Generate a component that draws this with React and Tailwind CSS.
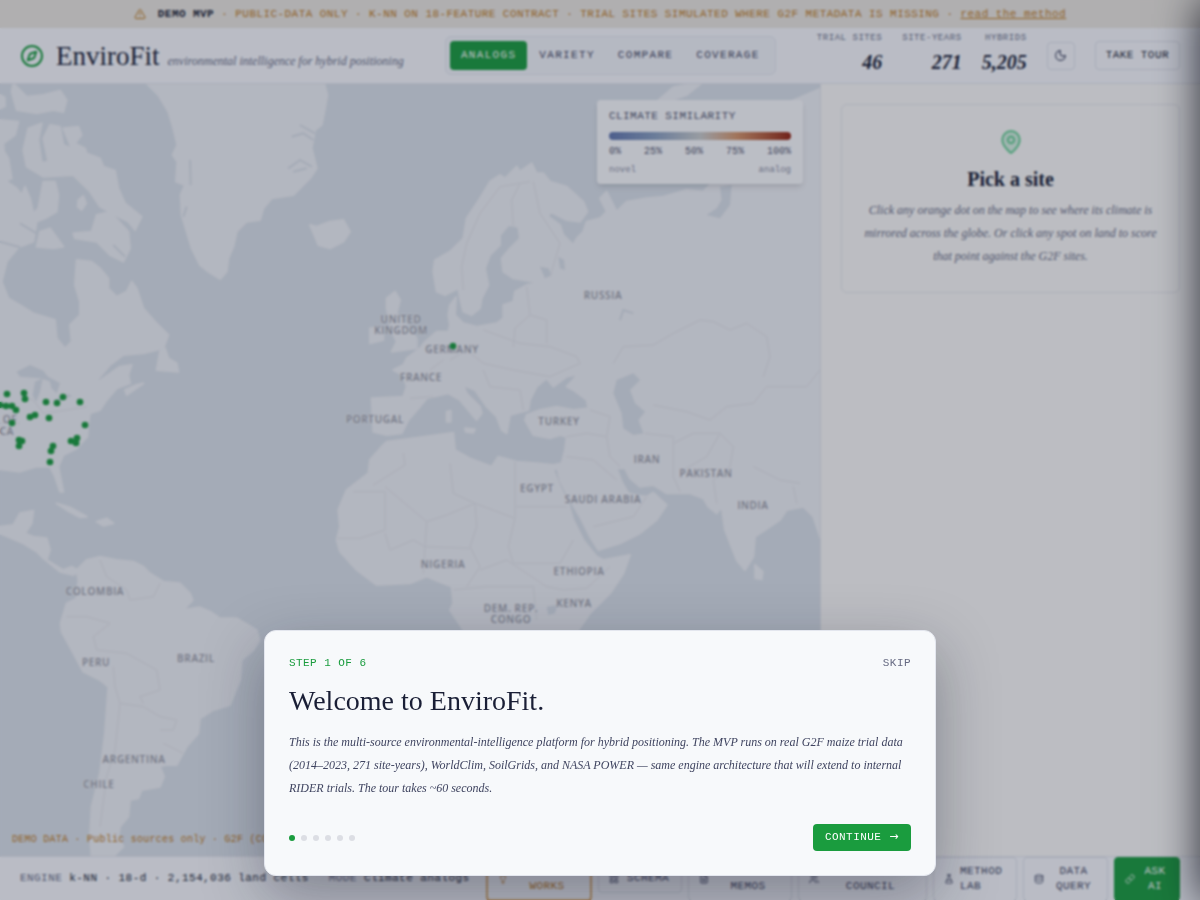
import { useState } from "react";
import {
  TriangleAlert,
  Compass,
  Moon,
  MapPin,
  Lightbulb,
  LayoutGrid,
  FileText,
  Users,
  FlaskConical,
  Database,
  Link,
} from "lucide-react";

const TABS = ["Analogs", "Variety", "Compare", "Coverage"];

const STATS = [
  { label: "Trial sites", value: "46" },
  { label: "Site-years", value: "271" },
  { label: "Hybrids", value: "5,205" },
];

const LAND = [
  // arctic islands
  "M40 250L55 265L80 290L130 285L180 272L200 300L190 336L160 330L110 340L50 330L35 275Z",
  "M0 285L14 292L15 318L0 326Z",
  "M0 360L55 365L45 405L10 430L12 455L25 475L35 535L0 550Z",
  "M85 385L125 370L115 420L125 488L145 485L130 415L150 375L180 380L190 435L215 445L190 385L235 380L245 405L225 430L255 445L260 460L300 475L310 500L345 512L355 565L375 610L425 650L405 690L385 665L355 650L300 620L270 575L220 525L130 530L80 500L70 450Z",
  "M290 645L330 635L385 695L390 745L370 785L330 765L290 725L225 715L220 700L275 695Z",
  "M120 695L150 685L190 740L160 745L110 740Z",
  "M235 600L250 588L258 610L245 630L233 620Z",
  // north america
  "M0 555L20 545L50 565L65 585L75 560L90 595L100 640L115 625L130 545L165 545L175 585L170 635L135 655L110 665L100 725L55 742L20 785L5 845L25 895L60 915L100 940L165 960L170 1015L195 1045L215 1025L210 975L240 945L240 905L225 855L230 780L275 785L300 805L325 835L325 865L350 890L380 875L395 845L410 865L430 925L465 965L505 1005L490 1045L430 1060L370 1065L330 1095L285 1148L300 1142L360 1100L395 1095L385 1125L390 1150L350 1165L320 1200L300 1230L270 1240L265 1270L262 1310L230 1345L190 1365L175 1400L185 1450L190 1475L180 1475L165 1430L150 1400L110 1400L60 1415L0 1408Z",
  "M430 1150L380 1185L375 1170L410 1155Z",
  "M480 1055L495 1045L505 1075L530 1090L535 1115L470 1110Z",
  // central america, caribbean
  "M0 1580L40 1575L60 1540L100 1532L95 1570L75 1600L100 1610L140 1615L150 1650L140 1680L190 1710L215 1700L235 1712L220 1725L180 1715L130 1675L110 1655L70 1630L0 1600Z",
  "M170 1510L210 1522L260 1550L240 1552L200 1530Z",
  "M290 1565L320 1555L340 1570L310 1577Z",
  // south america
  "M230 1710L260 1680L300 1670L350 1680L400 1685L430 1700L450 1720L490 1745L540 1750L570 1780L578 1800L550 1830L580 1825L600 1822L630 1835L660 1855L710 1855L770 1890L778 1920L760 1950L725 1980L720 2040L690 2115L640 2130L600 2155L595 2200L560 2240L530 2295L495 2295L480 2300L492 2330L480 2360L425 2370L415 2395L390 2400L385 2450L360 2480L355 2510L370 2540L340 2570L275 2570L270 2510L275 2420L300 2320L315 2200L325 2060L300 2040L250 2015L215 1950L185 1895L182 1870L200 1810L230 1795L235 1740Z",
  // greenland, iceland
  "M430 240L475 285L505 335L520 385L532 435L518 465L532 485L528 545L555 555L542 585L545 645L560 695L575 745L600 795L625 815L660 837L680 815L685 775L700 740L710 695L740 665L780 660L790 625L815 595L880 585L930 535L950 505L935 445L945 390L965 375L975 325L982 285L970 240Z",
  "M930 675L950 680L990 665L1030 660L1050 695L1030 725L990 745L955 735L945 710Z",
  // british isles
  "M1160 895L1185 875L1200 900L1190 940L1220 975L1250 1015L1250 1045L1175 1055L1190 1025L1175 995L1160 925Z",
  "M1110 985L1150 980L1150 1020L1110 1030Z",
  // eurasia and africa
  "M1180 1110L1210 1095L1220 1075L1260 1045L1275 1025L1310 995L1345 995L1350 975L1345 945L1350 915L1368 892L1365 945L1390 970L1430 980L1490 970L1510 955L1510 915L1540 905L1545 875L1580 855L1650 842L1600 845L1540 835L1510 815L1505 775L1530 745L1560 715L1555 680L1525 675L1500 705L1500 735L1470 765L1455 805L1465 855L1445 895L1440 925L1415 945L1390 935L1380 895L1375 865L1335 885L1310 875L1300 815L1305 780L1350 755L1390 715L1400 655L1440 595L1470 545L1500 525L1515 535L1550 500L1560 515L1595 490L1610 520L1630 520L1650 545L1700 560L1750 605L1762 635L1740 665L1700 660L1650 635L1645 650L1680 675L1690 705L1720 735L1730 715L1750 695L1760 665L1800 655L1820 635L1800 595L1820 575L1850 635L1880 605L1940 595L1990 590L2060 570L2110 575L2200 480L2300 400L2370 305L2470 262L2470 1640L2440 1550L2410 1520L2360 1530L2340 1560L2265 1610L2260 1670L2235 1710L2210 1680L2175 1590L2165 1520L2150 1540L2125 1520L2110 1495L2070 1480L2000 1480L1960 1455L1920 1460L1890 1435L1875 1405L1850 1405L1865 1445L1885 1480L1905 1485L1940 1490L1960 1478L2000 1515L1970 1560L1920 1600L1860 1630L1795 1650L1770 1610L1740 1550L1710 1500L1680 1440L1672 1405L1660 1410L1680 1460L1705 1510L1720 1560L1750 1620L1790 1670L1810 1680L1890 1665L1870 1720L1830 1780L1770 1840L1735 1890L1700 2000L1420 2000L1390 1890L1350 1830L1360 1810L1355 1760L1330 1750L1280 1730L1230 1750L1130 1755L1070 1710L1020 1655L1010 1620L1020 1580L1015 1530L1040 1470L1105 1420L1110 1380L1145 1340L1160 1325L1240 1315L1360 1298L1365 1350L1410 1375L1475 1400L1495 1370L1550 1385L1610 1390L1660 1395L1685 1390L1695 1350L1700 1310L1680 1305L1650 1315L1600 1305L1575 1260L1580 1245L1620 1230L1670 1220L1720 1230L1765 1225L1760 1200L1720 1170L1700 1160L1735 1122L1700 1130L1660 1160L1640 1135L1610 1160L1590 1200L1585 1230L1530 1245L1520 1300L1505 1290L1490 1250L1460 1220L1425 1170L1390 1155L1400 1180L1440 1220L1445 1240L1430 1260L1380 1200L1345 1180L1280 1195L1260 1220L1225 1260L1205 1300L1160 1305L1120 1295L1115 1195L1210 1190L1220 1160L1210 1125Z",
  // mediterranean islands, sri lanka, novaya zemlya
  "M1340 1235L1352 1232L1352 1265L1340 1265Z",
  "M1395 1285L1425 1288L1420 1298L1397 1295Z",
  "M2265 1695L2288 1715L2285 1738L2266 1735Z",
  "M1970 305L2020 262L2110 245L2060 285L2000 305Z",
];

const LAKES = [
  "M1850 1140L1900 1120L1920 1140L1890 1170L1905 1210L1935 1235L1915 1260L1930 1300L1900 1305L1870 1285L1865 1240L1840 1180Z",
  "M2160 560L2195 555L2190 615L2160 655L2120 645L2150 625L2165 600Z",
  "M50 1115L90 1095L130 1112L155 1145L120 1135L60 1130Z",
  "M105 1145L128 1135L120 1175L108 1205L98 1185Z",
  "M145 1130L180 1150L170 1180L155 1165Z",
  "M160 1200L205 1182L215 1188L170 1208Z",
  "M1620 800L1645 805L1655 825L1635 835Z",
  "M1675 770L1692 780L1695 810L1680 805Z",
  "M1640 1820L1672 1815L1665 1840L1645 1845Z",
];

const BORDERS = [
  "M1120 1455L1215 1395L1210 1360M1060 1475L1155 1475L1155 1590L1080 1615L1010 1615M1155 1460L1280 1565L1340 1545L1425 1510L1360 1480L1350 1390M1425 1510L1545 1555L1545 1385M1545 1520L1700 1520M1425 1510L1430 1580L1410 1640L1440 1700L1400 1760M1280 1565L1275 1640L1410 1645M1155 1600L1170 1650L1240 1620L1275 1640L1270 1720M1545 1555L1525 1640L1540 1690L1680 1690L1720 1620M1440 1710L1520 1680L1640 1760L1690 1770M1360 1770L1460 1760L1600 1760L1610 1860M1690 1770L1760 1765L1830 1700",
  "M1700 1310L1760 1300L1820 1310L1830 1370L1860 1400M1700 1370L1780 1380L1850 1440M1780 1580L1900 1550L1940 1490M1820 1310L1830 1250L1770 1230M1935 1300L2020 1310L2020 1430L2040 1475M2020 1330L2080 1300L2160 1300L2120 1370L2050 1410M2160 1300L2200 1340L2190 1400L2140 1440L2150 1510M2260 1400L2340 1440L2400 1450M2380 1460L2390 1510M1960 1215L2060 1235L2130 1260L2180 1220L2260 1210L2300 1160L2420 1160L2460 1110",
  "M1840 1090L1870 1040L1960 1035L2020 1000L2100 960L2140 965L2190 990L2240 970L2300 1010L2310 1070L2290 1130M1350 1080L1400 1050L1450 1090L1540 1110L1650 1130L1740 1090L1730 1070L1650 1040L1560 1030L1450 990M1540 1040L1545 985L1590 945L1640 960L1640 1030M1580 860L1590 945M1390 870L1385 800L1400 730L1440 640L1500 560L1590 545M1540 680L1535 600L1560 550M1600 545L1620 640L1680 730L1650 830M1230 1195L1300 1190M1290 1110L1330 1080M1450 1110L1470 1160L1560 1170L1570 1230",
  "M300 1680L320 1730L380 1770L390 1800L460 1790L480 1750M200 1850L260 1850L330 1870L280 1910L290 1950L380 1960L470 2010L480 2070L420 2090L430 2110M340 2000L345 2060L360 2110L430 2120L480 2150L530 2160L520 2190L480 2190M360 2110L345 2250L320 2330L300 2480M490 2230L550 2260M0 1270L60 1270M60 1190L100 1200L130 1240L200 1230L260 1220",
];

const INLETS =
  "M875 410L910 400L940 420M900 375L945 400M865 505L900 480L935 500M880 515L920 505M570 480L572 555M560 620L550 650M60 670L110 700M0 725L60 742M340 735L375 770M1860 960L1870 930L1900 940";

const LABELS = [
  [["RUSSIA"], 603, 299],
  [["UNITED", "KINGDOM"], 401, 323],
  [["GERMANY"], 452, 353],
  [["FRANCE"], 421, 381],
  [["PORTUGAL"], 375, 423],
  [["TURKEY"], 559, 425],
  [["IRAN"], 647, 463],
  [["PAKISTAN"], 706, 477],
  [["INDIA"], 753, 509],
  [["EGYPT"], 537, 492],
  [["SAUDI ARABIA"], 603, 503],
  [["NIGERIA"], 443, 568],
  [["ETHIOPIA"], 579, 575],
  [["KENYA"], 574, 607],
  [["DEM. REP.", "CONGO"], 511, 612],
  [["COLOMBIA"], 95, 595],
  [["PERU"], 96, 666],
  [["BRAZIL"], 196, 662],
  [["ARGENTINA"], 134, 763],
  [["CHILE"], 99, 788],
  [["OF"], 10, 423],
  [["CA"], 7, 435],
];

const SITES = [
  [7, 394], [24, 393], [25, 399], [46, 402], [57, 403], [63, 397], [80, 402],
  [0, 405], [6, 406], [12, 406], [16, 410], [30, 417], [35, 415], [49, 418],
  [12, 423], [85, 425], [19, 440], [22, 441], [19, 446], [53, 446], [51, 451],
  [71, 441], [77, 438], [76, 443], [50, 462], [453, 346],
];

// map units are a third of a pixel
function WorldMap() {
  return (
    <svg
      viewBox="0 252 2460 2316"
      preserveAspectRatio="xMidYMid slice"
      className="absolute inset-0 w-full h-full bg-[#dae1e9]"
      role="img"
      aria-label="World map of trial sites"
    >
      <g fill="#eff1f5" stroke="#eff1f5" strokeWidth="6" strokeLinejoin="round">
        {LAND.map((d) => (
          <path key={d} d={d} />
        ))}
      </g>
      <g fill="#dae1e9">
        {LAKES.map((d) => (
          <path key={d} d={d} />
        ))}
      </g>
      <g fill="none" stroke="#e3e6eb" strokeWidth="3" strokeLinejoin="round">
        {BORDERS.map((d) => (
          <path key={d} d={d} />
        ))}
        <path d={INLETS} stroke="#dae1e9" strokeWidth="6" />
      </g>
      <g
        className="font-['Open_Sans',sans-serif] font-semibold"
        fontSize="30"
        fill="#989aa5"
        stroke="#eff1f5"
        strokeWidth="3"
        paintOrder="stroke"
        textAnchor="middle"
        letterSpacing="2"
      >
        {LABELS.map(([lines, x, y]) => (
          <text key={lines[0]} x={x * 3} y={y * 3}>
            {lines.map((line, i) => (
              <tspan key={line} x={x * 3} dy={i * 33}>
                {line}
              </tspan>
            ))}
          </text>
        ))}
      </g>
      <g fill="#1a9c3e">
        {SITES.map(([x, y]) => (
          <circle key={`${x}-${y}`} cx={x * 3} cy={y * 3} r="10" />
        ))}
      </g>
    </svg>
  );
}

function Legend() {
  return (
    <div className="absolute top-4 right-[17px] w-[206px] rounded bg-[#fafbfd] px-3 py-2 shadow-md font-['Liberation_Mono',monospace] text-[#50546c]">
      <div className="text-[11px] leading-4 tracking-[0.04em]">
        CLIMATE SIMILARITY
      </div>
      <div className="mt-2 flex h-2 overflow-hidden rounded-full">
        <div className="flex-1 bg-linear-to-r from-[#6277ae] via-[#8aa0c0] to-[#c9cccc]"></div>
        <div className="flex-1 bg-linear-to-r from-[#c9cccc] via-[#d6966a] via-40% to-[#93210f]"></div>
      </div>
      <div className="mt-1 flex justify-between text-[10px] leading-4">
        <span>0%</span>
        <span>25%</span>
        <span>50%</span>
        <span>75%</span>
        <span>100%</span>
      </div>
      <div className="mt-1 flex justify-between text-[9px] leading-3 text-[#8b8fa3]">
        <span>novel</span>
        <span>analog</span>
      </div>
    </div>
  );
}

function FooterButton({ icon: Icon, label, className }) {
  return (
    <button
      className={`flex shrink-0 items-center justify-center gap-1.5 rounded border px-[10px] text-[11px] leading-[15px] tracking-[0.04em] ${className}`}
    >
      <Icon size={10} className="shrink-0" />
      <span className="flex-1">{label}</span>
    </button>
  );
}

function Tour({ step, total, onNext, onSkip }) {
  return (
    <div className="absolute inset-0 z-50 flex items-end justify-center bg-[#1a1f36]/28 backdrop-blur-[1px] p-6">
      <div
        role="dialog"
        aria-labelledby="tour-title"
        className="w-full max-w-2xl rounded-xl border border-[#e3e6ee] bg-[#f7f9fb] p-6 shadow-[0_20px_60px_rgba(20,22,40,0.35)]"
      >
        <div className="flex items-center justify-between font-['Liberation_Mono',monospace] text-[11px] leading-4 tracking-[0.04em]">
          <span className="text-[#1a9c3e]">
            STEP {step} OF {total}
          </span>
          <button onClick={onSkip} className="text-[#666a82]">
            SKIP
          </button>
        </div>

        <h2
          id="tour-title"
          className="mt-3 text-[28px] leading-9 text-[#1a1f36]"
        >
          Welcome to EnviroFit.
        </h2>

        <p className="mt-3 text-[12px] leading-[23px] italic text-[#3f4460]">
          This is the multi-source environmental-intelligence platform for
          hybrid positioning. The MVP runs on real G2F maize trial data
          (2014–2023, 271 site-years), WorldClim, SoilGrids, and NASA POWER —
          same engine architecture that will extend to internal RIDER trials.
          The tour takes ~60 seconds.
        </p>

        <div className="mt-6 flex items-center justify-between">
          <div className="flex gap-1.5">
            {Array.from({ length: total }, (_, i) => (
              <span
                key={i}
                className={`size-1.5 rounded-full ${i + 1 === step ? "bg-[#1a9c3e]" : "bg-[#dcdee4]"}`}
              ></span>
            ))}
          </div>
          <button
            onClick={onNext}
            className="flex h-[27px] items-center gap-2 rounded bg-[#1a9c3e] px-3 font-['Liberation_Mono',monospace] text-[11px] tracking-[0.04em] text-white"
          >
            CONTINUE
            <span className="font-['DejaVu_Sans',sans-serif]">→</span>
          </button>
        </div>
      </div>
    </div>
  );
}

export default function App() {
  const [tab, setTab] = useState("Analogs");
  const [step, setStep] = useState(1);
  const [tourOpen, setTourOpen] = useState(true);

  return (
    <div className="relative flex h-screen flex-col overflow-hidden bg-[#fbfaf8] font-['Liberation_Serif',serif] text-[#1a1f36]">
      {/* BANNER */}
      <div className="flex h-7 shrink-0 items-center justify-center gap-3 bg-[#eae6df] font-['Liberation_Mono',monospace] text-[11px] tracking-[0.04em] text-[#bd7a1c]">
        <TriangleAlert size={12} />
        <p className="whitespace-nowrap">
          <b className="text-[#1a1f36]">DEMO MVP</b> · PUBLIC-DATA ONLY · K-NN ON
          18-FEATURE CONTRACT · TRIAL SITES SIMULATED WHERE G2F METADATA IS
          MISSING ·{" "}
          <a href="#method" className="underline">
            read the method
          </a>
        </p>
      </div>

      {/* HEADER */}
      <header className="flex h-14 shrink-0 items-center justify-between border-b border-[#e3e5ec] bg-[#f8f9fd] px-5">
        <div className="flex items-center gap-3">
          <Compass size={24} className="text-[#1a9c3e]" />
          <div className="flex items-baseline gap-2">
            <h1 className="text-[27px] leading-9">EnviroFit</h1>
            <span className="whitespace-nowrap text-[12px] italic text-[#696d86]">
              environmental intelligence for hybrid positioning
            </span>
          </div>
        </div>

        <nav className="flex gap-px rounded-md border border-[#e6e8f0] bg-[#f2f4f9] p-1 font-['Liberation_Mono',monospace]">
          {TABS.map((name) => (
            <button
              key={name}
              onClick={() => setTab(name)}
              className={`h-[29px] rounded px-[11px] text-[11px] tracking-[0.12em] uppercase ${
                tab === name ? "bg-[#1a9c3e] text-white" : "text-[#3f4460]"
              }`}
            >
              {name}
            </button>
          ))}
        </nav>

        <div className="flex items-center gap-5">
          {STATS.map((s) => (
            <div key={s.label} className="mb-1 flex flex-col items-end">
              <span className="font-['Liberation_Mono',monospace] text-[9px] leading-3 tracking-[0.06em] uppercase text-[#696d86]">
                {s.label}
              </span>
              <span className="mt-1 text-[20px] leading-7 font-bold italic">
                {s.value}
              </span>
            </div>
          ))}
          <button
            aria-label="Dark mode"
            className="flex size-7 items-center justify-center rounded border border-[#dfe1ea] text-[#3f4460]"
          >
            <Moon size={13} />
          </button>
          <button className="h-[29px] rounded border border-[#dfe1ea] px-[10px] font-['Liberation_Mono',monospace] text-[11px] tracking-[0.04em]">
            TAKE TOUR
          </button>
        </div>
      </header>

      {/* MAP + PANEL */}
      <main className="flex min-h-0 flex-1">
        <section className="relative flex-1 overflow-hidden">
          <WorldMap />
          <Legend />
          <p className="absolute bottom-2 left-3 whitespace-nowrap font-['Liberation_Mono',monospace] text-[10px] leading-4 tracking-wide text-[#bd7a1c]">
            DEMO DATA · Public sources only · G2F (CC-BY)
          </p>
        </section>

        <aside className="w-[380px] shrink-0 border-l border-[#e3e5ec] p-5">
          <div className="rounded-md border border-[#e6e7ec] px-5 py-6 text-center">
            <MapPin size={26} className="mx-auto fill-[#d8f0e2] text-[#6fd29a]" />
            <h2 className="mt-3 text-[20px] leading-6 font-bold">Pick a site</h2>
            <p className="mt-2 text-[12px] leading-[23px] italic text-[#696d86]">
              Click any orange dot on the map to see where its climate is
              mirrored across the globe. Or click any spot on land to score that
              point against the G2F sites.
            </p>
          </div>
        </aside>
      </main>

      {/* FOOTER */}
      <footer className="flex h-11 shrink-0 items-center justify-between border-t border-[#e3e5ec] bg-[#f8f9fd] px-5 font-['Liberation_Mono',monospace]">
        <div className="flex gap-5 whitespace-nowrap text-[11px] tracking-[0.04em]">
          <span>
            <span className="text-[#696d86]">ENGINE</span> k-NN · 18-d ·
            2,154,036 land cells
          </span>
          <span>
            <span className="text-[#696d86]">MODE</span> Climate analogs
          </span>
        </div>
        <div className="flex items-center gap-1.5 text-[#3f4460]">
          <FooterButton
            icon={Lightbulb}
            label="HOW IT WORKS"
            className="h-11 w-[106px] border-2 border-[#e0b070] text-[#bd7a1c]"
          />
          <FooterButton
            icon={LayoutGrid}
            label="SCHEMA"
            className="h-7 w-[84px] border-[#dfe1ea]"
          />
          <FooterButton
            icon={FileText}
            label="SEASON MEMOS"
            className="h-11 w-[104px] border-[#dfe1ea]"
          />
          <FooterButton
            icon={Users}
            label="BREEDING COUNCIL"
            className="h-11 w-[129px] border-[#dfe1ea]"
          />
          <FooterButton
            icon={FlaskConical}
            label="METHOD LAB"
            className="h-11 w-[84px] border-[#dfe1ea] text-left"
          />
          <FooterButton
            icon={Database}
            label="DATA QUERY"
            className="h-11 w-[85px] border-[#dfe1ea]"
          />
          <FooterButton
            icon={Link}
            label="ASK AI"
            className="h-11 w-[66px] border-[#1a9c3e] bg-[#1a9c3e] text-white"
          />
        </div>
      </footer>

      {/* closed drawer, only its shadow reaches the page */}
      <div className="absolute inset-y-0 left-full w-96 shadow-[0_0_40px_rgba(10,10,16,0.85)]"></div>

      {tourOpen && (
        <Tour
          step={step}
          total={6}
          onNext={() => setStep(Math.min(step + 1, 6))}
          onSkip={() => setTourOpen(false)}
        />
      )}
    </div>
  );
}
